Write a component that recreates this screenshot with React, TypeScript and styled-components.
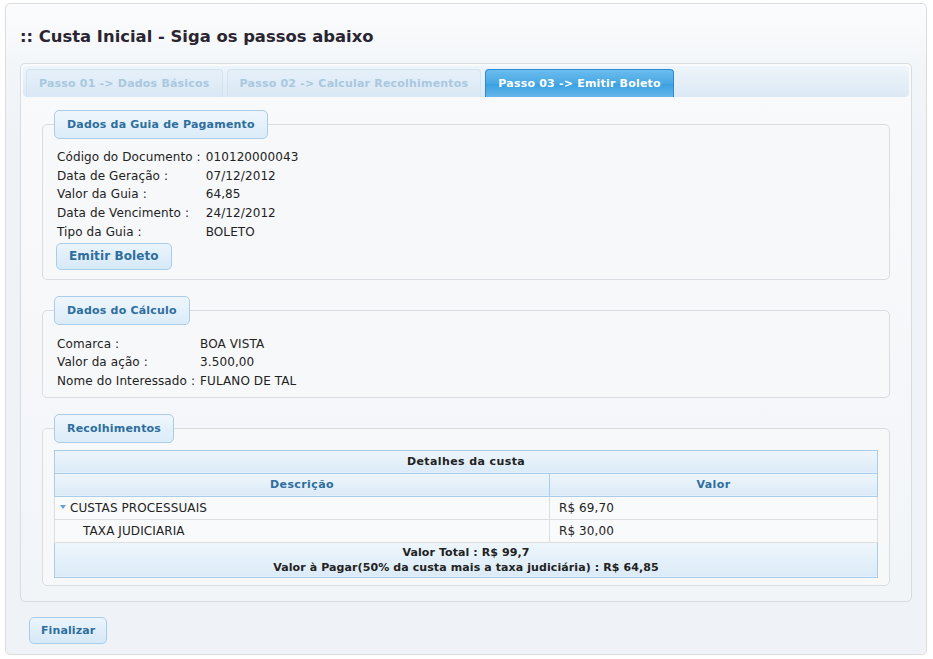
import React from "react";
import styled, { createGlobalStyle } from "styled-components";

const GlobalStyle = createGlobalStyle`
  html, body {
    margin: 0;
    padding: 0;
    background: #ffffff;
  }
  body {
    font-family: "DejaVu Sans", Verdana, sans-serif;
    font-size: 12px;
    color: #222;
  }
`;

const Page = styled.div`
  padding: 3px 6px 4px 5px;
`;

const Panel = styled.div`
  height: 650px;
  border: 1px solid #dcdcdc;
  border-radius: 5px;
  background: linear-gradient(#fbfcfd 0px, #f3f6f9 60px, #eff2f6 140px, #eff2f6);
  padding: 0 14px;
  display: flex;
  flex-direction: column;
`;

const Title = styled.h1`
  margin: 0;
  padding: 23px 0 0 0;
  height: 36px;
  font-size: 16.4px;
  font-weight: bold;
  color: #2a2530;
`;

const Tabs = styled.div`
  border: 1px solid #d8dbdf;
  border-radius: 5px;
  padding: 2px;
  background: linear-gradient(#f9fafc, #f2f5f8);
`;

const TabBar = styled.div`
  display: flex;
  gap: 4px;
  padding: 3px 3px 0;
  height: 28px;
  border-radius: 4px;
  background: linear-gradient(#eef4fa, #dce9f5);
`;

const Tab = styled.div<{ $active?: boolean }>`
  display: flex;
  align-items: center;
  padding: 0 12px;
  height: 28px;
  box-sizing: border-box;
  border: 1px solid ${(p) => (p.$active ? "#2d8bd4" : "#d2e3f1")};
  border-bottom: none;
  border-radius: 4px 4px 0 0;
  font-weight: bold;
  font-size: 11px;
  letter-spacing: 0.2px;
  color: ${(p) => (p.$active ? "#ffffff" : "#a9c8df")};
  background: ${(p) =>
    p.$active
      ? "linear-gradient(#6abcee, #49a8e3 50%, #37a0e0 51%, #66b6ea)"
      : "linear-gradient(#e6f0f9, #d9e8f5)"};
`;

const TabPanel = styled.div`
  padding: 13px 19px 13px 19px;
  display: flex;
  flex-direction: column;
  gap: 16px;
`;

const Fieldset = styled.fieldset<{ $pb?: number; $pl?: number }>`
  margin: 0;
  border: 1px solid #d9dde1;
  border-radius: 5px;
  background: #f7f8fa;
  padding: 0 11px ${(p) => p.$pb ?? 9}px ${(p) => p.$pl ?? 14}px;
`;

const Legend = styled.legend<{ $shift?: number }>`
  margin-left: ${(p) => p.$shift ?? -3}px;
  padding: 0 12px;
  height: 29px;
  line-height: 27px;
  box-sizing: border-box;
  border: 1px solid #a9cde9;
  border-radius: 5px;
  font-weight: bold;
  font-size: 11px;
  letter-spacing: 0.2px;
  color: #2e6e9e;
  background: linear-gradient(#eef6fc, #dbecf8);
`;

const InfoGrid = styled.div<{ $mt?: number }>`
  display: grid;
  grid-template-columns: max-content 1fr;
  column-gap: 5px;
  line-height: 18.7px;
  margin-top: ${(p) => p.$mt ?? 9}px;
  letter-spacing: 0.1px;
  color: #222;
`;

const Button = styled.button<{ $size?: number }>`
  font-family: "DejaVu Sans", Verdana, sans-serif;
  font-weight: bold;
  font-size: ${(p) => p.$size ?? 12}px;
  letter-spacing: 0.1px;
  color: #2e6e9e;
  height: 27px;
  padding: 0 ${(p) => (p.$size === 11 ? 11 : 12)}px;
  border: 1px solid #a9cde9;
  border-radius: 5px;
  background: linear-gradient(#eaf4fc, #d6e9f7);
  cursor: pointer;
`;

const ActionRow = styled.div`
  margin-top: 1px;
  margin-left: -1px;
`;

const Table = styled.table`
  width: 100%;
  border-collapse: collapse;
  margin: 7px 0 0;
  font-size: 12px;
`;

const HeadCell = styled.th<{ $blue?: boolean }>`
  height: 22px;
  padding: 0;
  border: 1px solid #a9cde9;
  font-weight: bold;
  font-size: 11px;
  letter-spacing: 0.4px;
  color: ${(p) => (p.$blue ? "#2e6e9e" : "#222")};
  background: linear-gradient(#eef6fc, #dbebf7);
`;

const Cell = styled.td<{ $indent?: number }>`
  height: 22px;
  padding: 0 0 0 ${(p) => p.$indent ?? 9}px;
  border: 1px solid #dedede;
  background: #f9fafb;
  letter-spacing: 0.1px;
  color: #222;
`;

const FootCell = styled.td`
  border: 1px solid #a9cde9;
  text-align: center;
  font-weight: bold;
  font-size: 11px;
  letter-spacing: 0.1px;
  line-height: 15px;
  padding: 2px 0 2px;
  color: #222;
  background: linear-gradient(#eef6fc, #dbebf7);
`;

const Arrow = styled.span`
  display: inline-block;
  width: 0;
  height: 0;
  border-left: 3.5px solid transparent;
  border-right: 3.5px solid transparent;
  border-top: 4px solid #6a9fd0;
  margin: 0 4px 2px 0;
  vertical-align: middle;
`;

const Footer = styled.div`
  padding: 15px 0 0 9px;
`;

const guia = [
  ["Código do Documento :", "010120000043"],
  ["Data de Geração :", "07/12/2012"],
  ["Valor da Guia :", "64,85"],
  ["Data de Vencimento :", "24/12/2012"],
  ["Tipo da Guia :", "BOLETO"],
];

const calculo = [
  ["Comarca :", "BOA VISTA"],
  ["Valor da ação :", "3.500,00"],
  ["Nome do Interessado :", "FULANO DE TAL"],
];

function App() {
  return (
    <Page>
      <GlobalStyle />
      <Panel>
        <Title>:: Custa Inicial - Siga os passos abaixo</Title>
        <Tabs>
          <TabBar>
            <Tab>Passo 01 -&gt; Dados Básicos</Tab>
            <Tab>Passo 02 -&gt; Calcular Recolhimentos</Tab>
            <Tab $active>Passo 03 -&gt; Emitir Boleto</Tab>
          </TabBar>
          <TabPanel>
            <Fieldset>
              <Legend>Dados da Guia de Pagamento</Legend>
              <InfoGrid>
                {guia.map(([k, v]) => (
                  <React.Fragment key={k}>
                    <span>{k}</span>
                    <span>{v}</span>
                  </React.Fragment>
                ))}
              </InfoGrid>
              <ActionRow>
                <Button>Emitir Boleto</Button>
              </ActionRow>
            </Fieldset>
            <Fieldset $pb={6}>
              <Legend>Dados do Cálculo</Legend>
              <InfoGrid $mt={10}>
                {calculo.map(([k, v]) => (
                  <React.Fragment key={k}>
                    <span>{k}</span>
                    <span>{v}</span>
                  </React.Fragment>
                ))}
              </InfoGrid>
            </Fieldset>
            <Fieldset $pb={7} $pl={11}>
              <Legend $shift={0}>Recolhimentos</Legend>
              <Table>
                <thead>
                  <tr>
                    <HeadCell colSpan={2}>Detalhes da custa</HeadCell>
                  </tr>
                  <tr>
                    <HeadCell $blue style={{ width: 494 }}>
                      Descrição
                    </HeadCell>
                    <HeadCell $blue>Valor</HeadCell>
                  </tr>
                </thead>
                <tbody>
                  <tr>
                    <Cell $indent={5}>
                      <Arrow />
                      CUSTAS PROCESSUAIS
                    </Cell>
                    <Cell>R$ 69,70</Cell>
                  </tr>
                  <tr>
                    <Cell $indent={28}>TAXA JUDICIARIA</Cell>
                    <Cell>R$ 30,00</Cell>
                  </tr>
                  <tr>
                    <FootCell colSpan={2}>
                      Valor Total : R$ 99,7
                      <br />
                      Valor à Pagar(50% da custa mais a taxa judiciária) : R$ 64,85
                    </FootCell>
                  </tr>
                </tbody>
              </Table>
            </Fieldset>
          </TabPanel>
        </Tabs>
        <Footer>
          <Button $size={11}>Finalizar</Button>
        </Footer>
      </Panel>
    </Page>
  );
}

export default App;
